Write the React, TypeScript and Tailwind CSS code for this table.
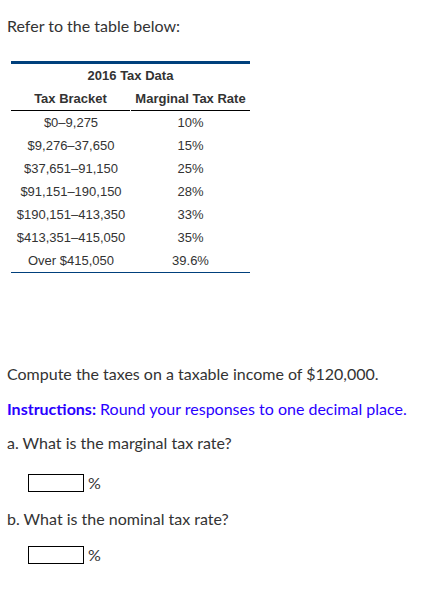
import React from "react";

const rows: [string, string][] = [
  ["$0–9,275", "10%"],
  ["$9,276–37,650", "15%"],
  ["$37,651–91,150", "25%"],
  ["$91,151–190,150", "28%"],
  ["$190,151–413,350", "33%"],
  ["$413,351–415,050", "35%"],
  ["Over $415,050", "39.6%"],
];

const sans = { fontFamily: "Lato, 'Open Sans', sans-serif" };
const arial = { fontFamily: "'Liberation Sans', Arial, sans-serif" };

function Answer() {
  return (
    <div className="flex items-center h-[18px] pl-[28px]">
      <div className="w-[56px] h-[18px] border border-black bg-white" />
      <span className="ml-[4px] text-[16px] text-[#333]" style={sans}>%</span>
    </div>
  );
}

export default function App() {
  return (
    <div className="w-[444px] h-[607px] bg-white text-[#333]" style={sans}>
      <div className="pl-[7px] pt-[17px] text-[16px] leading-[18px]">Refer to the table below:</div>

      <div className="ml-[11px] mt-[26px] w-[239px]" style={arial}>
        <div className="h-[3px] bg-[#00407c]" />
        <div className="text-center font-bold text-[13px] leading-[24px] h-[24px] text-[#333]">2016 Tax Data</div>
        <div className="flex text-[13px] font-bold leading-[22px]">
          <div className="w-[119px] h-[23px] text-center border-b border-black mr-[1px]">Tax Bracket</div>
          <div className="flex-1 h-[23px] text-center border-b border-black">Marginal Tax Rate</div>
        </div>
        {rows.map(([a, b]) => (
          <div key={a} className="flex text-[13px] h-[23px] leading-[23px] text-[#333]">
            <div className="w-[120px] text-center">{a}</div>
            <div className="flex-1 text-center">{b}</div>
          </div>
        ))}
        <div className="h-[1px] bg-[#00407c]" />
      </div>

      <div className="pl-[7px] mt-[92px] text-[16px] leading-[18px]">Compute the taxes on a taxable income of $120,000.</div>
      <div className="pl-[7px] mt-[17px] text-[16px] leading-[18px] text-[#2a00ff]">
        <span className="font-bold">Instructions:</span> Round your responses to one decimal place.
      </div>
      <div className="pl-[7px] mt-[16px] text-[16px] leading-[18px]">a. What is the marginal tax rate?</div>
      <div className="mt-[22px]"><Answer /></div>
      <div className="pl-[7px] mt-[18px] text-[16px] leading-[18px]">b. What is the nominal tax rate?</div>
      <div className="mt-[18px]"><Answer /></div>
    </div>
  );
}
